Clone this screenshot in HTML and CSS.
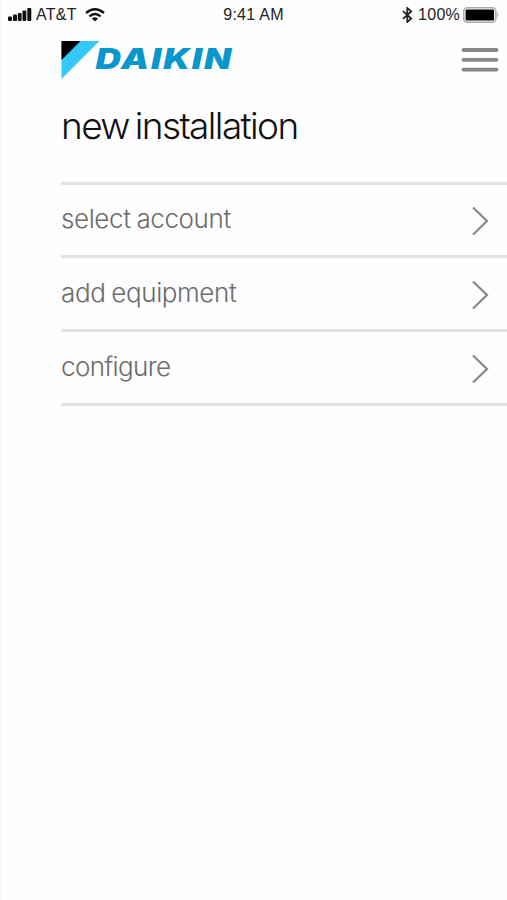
FILE: index.html
```html
<!DOCTYPE html>
<html lang="en">
<head>
<meta charset="utf-8">
<title>new installation</title>
<link rel="stylesheet" href="styles.css">
</head>
<body>
<div class="status">
  <div class="carrier">
    <svg width="24" height="14" viewBox="0 0 24 14"><g fill="#111"><rect x="0" y="8.5" width="4" height="4.5" rx="1"/><rect x="5" y="6.5" width="4" height="6.5" rx="1"/><rect x="9.8" y="5" width="3.8" height="8" rx="1"/><rect x="14.5" y="2.5" width="3.8" height="10.5" rx="1"/><rect x="19.3" y="0" width="4" height="13" rx="1"/></g></svg>
    <span class="network">AT&amp;T</span>
    <svg width="20" height="14" viewBox="0 0 20 14"><g fill="none" stroke="#111" stroke-width="2.3"><path d="M1 5Q10-2.5 19 5"/><path d="M4.4 8.3Q10 3.6 15.6 8.3"/></g><path d="M6.8 10.4Q10 8 13.2 10.4L10 13.6Z" fill="#111"/></svg>
  </div>
  <span class="time">9:41 AM</span>
  <div class="power">
    <svg width="11" height="16" viewBox="0 0 11 16"><path d="M1 4.2L9.2 11.6L5.3 15V1L9.2 4.4L1 11.8" fill="none" stroke="#222" stroke-width="1.8"/></svg>
    <span class="percent">100%</span>
    <svg width="36" height="16" viewBox="0 0 36 16"><rect x=".8" y=".8" width="32" height="14.4" rx="3.5" fill="#fff" stroke="#aaa" stroke-width="1.5"/><rect x="2.6" y="2.6" width="28.4" height="10.8" rx="1" fill="#000"/><path d="M34 5.5Q36.2 8 34 10.5Z" fill="#aaa"/></svg>
  </div>
</div>
<header class="header">
  <svg class="logo" width="174" height="40" viewBox="0 0 174 40">
    <path d="M.5 1H38.5L.5 39Z" fill="#35c8f8"/>
    <path d="M.5 1H19.5L.5 20Z" fill="#000"/>
    <text class="brand" x="34.5" y="29.3" textLength="137.5" lengthAdjust="spacingAndGlyphs">DAIKIN</text>
  </svg>
  <svg class="menu" width="38" height="26" viewBox="0 0 38 26"><path d="M2.5 3H35.5M2.5 12.8H35.5M2.5 22.6H35.5" stroke="#888" stroke-width="3.8" stroke-linecap="round"/></svg>
</header>
<main class="main">
  <h1 class="title">new installation</h1>
  <ul class="steps">
    <li class="step"><span class="label">select account</span><svg class="chevron" width="18" height="30" viewBox="0 0 18 30"><path d="M2 1.5L16 15L2 28.5"/></svg></li>
    <li class="step"><span class="label">add equipment</span><svg class="chevron" width="18" height="30" viewBox="0 0 18 30"><path d="M2 1.5L16 15L2 28.5"/></svg></li>
    <li class="step"><span class="label">configure</span><svg class="chevron" width="18" height="30" viewBox="0 0 18 30"><path d="M2 1.5L16 15L2 28.5"/></svg></li>
  </ul>
</main>
</body>
</html>
```
FILE: styles.css
```css
* { box-sizing: border-box; }
body {
  margin: 0;
  min-height: 900px;
  background: #fefefe;
  border-left: 1px solid #f6f6f6;
  font-family: Inter, "Liberation Sans", sans-serif;
}
svg { display: block; flex: none; }
.status {
  display: grid;
  grid-template-columns: 1fr auto 1fr;
  align-items: center;
  height: 30px;
  padding: 0 8px 0 7px;
  font: 16px/30px "Liberation Sans", sans-serif;
  letter-spacing: 0.25px;
  color: #222;
}
.carrier, .power { display: flex; align-items: center; }
.network { margin: 0 8px 0 4px; }
.power { justify-content: flex-end; }
.percent { margin: 0 3px 0 5px; }
.header {
  display: flex;
  justify-content: space-between;
  padding: 10px 8px 0 60px;
  height: 70px;
}
.menu { margin-top: 7px; }
.brand {
  font: italic 900 28px Inter, sans-serif;
  letter-spacing: 1.5px;
  fill: #0797cb;
}
.main { padding-left: 60px; }
.title {
  margin: 0;
  height: 82px;
  font-size: 37px;
  line-height: 51px;
  font-weight: 300;
  letter-spacing: -1.6px;
  word-spacing: -3px;
  color: #111;
  white-space: nowrap;
}
.steps {
  list-style: none;
  margin: 0;
  padding: 0;
  border-top: 3px solid #e3e3e3;
}
.step {
  display: flex;
  align-items: center;
  justify-content: space-between;
  height: 74px;
  padding: 2px 18px 0 0;
  border-bottom: 3px solid #e3e3e3;
}
.step:first-child { height: 73px; padding-top: 0; }
.label {
  padding-bottom: 3px;
  font-size: 26px;
  line-height: 36px;
  font-weight: 300;
  letter-spacing: -0.4px;
  word-spacing: -1px;
  color: #6b6b6b;
}
.step:last-child .label { letter-spacing: -0.65px; }
.chevron {
  margin-top: 1px;
  fill: none;
  stroke: #888;
  stroke-width: 2.2;
}
```
